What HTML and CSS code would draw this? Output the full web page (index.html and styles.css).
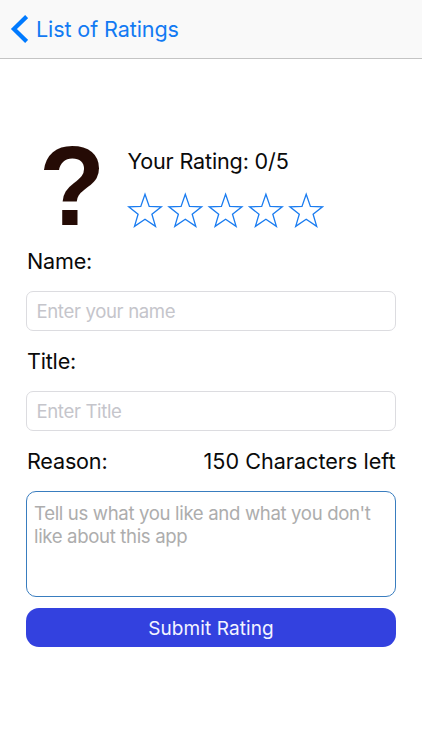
FILE: index.html
```html
<!DOCTYPE html>
<html lang="en">
<head>
<meta charset="utf-8">
<title>Rating</title>
<link rel="stylesheet" href="styles.css">
</head>
<body>
<header class="navbar">
  <svg class="back-icon" width="18" height="28" viewBox="0 0 18 28"><path d="M16.6 1.6 3.9 14 16.6 26.4" fill="none" stroke="#007aff" stroke-width="4.2"/></svg>
  <span class="back-label">List of Ratings</span>
</header>
<main class="form">
  <section class="summary">
    <div class="picture"><span class="mark">?</span></div>
    <div class="rating">
      <div class="rating-label"><span>Your Rating: 0/5</span></div>
      <svg class="stars" width="200" height="38" viewBox="0 0 200 38">
        <defs><path id="star" d="M18 3.3 22.2 15.4 34.3 15.8 24.9 23.2 28.5 35.4 18 28.3 7.5 35.4 11.1 23.2 1.7 15.8 13.8 15.4Z" fill="none" stroke="#1a7cf0" stroke-width="1.3"/></defs>
        <use href="#star"/><use href="#star" x="40.3"/><use href="#star" x="80.6"/><use href="#star" x="120.9"/><use href="#star" x="161.2"/>
      </svg>
    </div>
  </section>
  <div class="label-row"><span>Name:</span></div>
  <div class="field"><span>Enter your name</span></div>
  <div class="label-row"><span>Title:</span></div>
  <div class="field"><span>Enter Title</span></div>
  <div class="label-row"><span>Reason:</span><span class="counter">150 Characters left</span></div>
  <div class="reason-box">Tell us what you like and what you don't<br>like about this app</div>
  <div class="submit"><span>Submit Rating</span></div>
</main>
</body>
</html>
```

FILE: styles.css
```css
* { box-sizing: border-box; }
body {
  margin: 0;
  width: 422px;
  height: 750px;
  background: #fff;
  color: #0a0a0a;
  font-family: Inter, Roboto, sans-serif;
  font-size: 21.6px;
  overflow: hidden;
  white-space: nowrap;
}
.navbar {
  display: flex;
  align-items: center;
  height: 59px;
  padding-left: 10px;
  background: #f9f9f9;
  border-bottom: 1px solid #c4c4c4;
  color: #127af3;
}
.back-icon { margin-right: 8px; }
.back-label { letter-spacing: -0.12px; }
.form {
  display: flex;
  flex-direction: column;
  padding: 77px 26.4px 0;
}
.summary { display: flex; height: 104px; }
.picture {
  width: 101px;
  height: 100px;
  padding-left: 13px;
}
.mark {
  display: block;
  font: bold 113px/100px "Liberation Sans", Arial, sans-serif;
  color: #250b05;
  transform: scaleX(0.96);
  transform-origin: left;
}
.rating { padding-top: 11px; }
.rating-label { height: 28px; line-height: 28px; letter-spacing: -0.17px; }
.stars { display: block; margin: 16px 0 0 -0.5px; }
.label-row {
  display: flex;
  justify-content: space-between;
  height: 42px;
  padding-left: 0.6px;
  line-height: 42px;
  letter-spacing: -0.2px;
}
.counter { letter-spacing: 0; }
.field {
  height: 40px;
  margin: 9px 0 9px;
  padding-left: 9px;
  border: 1px solid #dcdce0;
  border-radius: 7px;
  font-size: 18.6px;
  line-height: 38px;
  letter-spacing: -0.35px;
  color: #c5c5cb;
}
.reason-box {
  height: 106px;
  margin-top: 9px;
  padding: 10px 6.6px;
  border: 1.3px solid #397dbf;
  border-radius: 10px;
  font-size: 18.6px;
  line-height: 23px;
  letter-spacing: -0.35px;
  color: #adadad;
}
.submit {
  height: 39.5px;
  margin-top: 10.5px;
  border-radius: 13px;
  background: #3341df;
  color: #f3f4ff;
  font-size: 19px;
  line-height: 41px;
  letter-spacing: 0.1px;
  text-align: center;
}
```
